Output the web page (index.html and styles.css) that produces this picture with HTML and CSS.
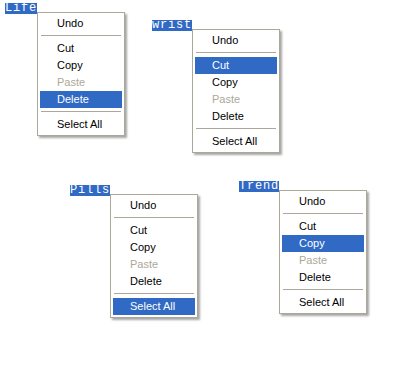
FILE: index.html
```html
<!DOCTYPE html>
<html lang="en">
<head>
    <meta charset="UTF-8">
    <title>Context menus</title>
    <link rel="stylesheet" href="styles.css">
</head>
<body>
    <div class="canvas">

        <!-- Life: Delete выделен -->
        <div class="demo demo-life">
            <span class="word">Life</span>
            <ul class="menu">
                <li class="item">Undo</li>
                <li class="sep"></li>
                <li class="item">Cut</li>
                <li class="item">Copy</li>
                <li class="item disabled">Paste</li>
                <li class="item active">Delete</li>
                <li class="sep"></li>
                <li class="item">Select All</li>
            </ul>
        </div>

        <!-- wrist: Cut выделен -->
        <div class="demo demo-wrist">
            <span class="word">wrist</span>
            <ul class="menu">
                <li class="item">Undo</li>
                <li class="sep"></li>
                <li class="item active">Cut</li>
                <li class="item">Copy</li>
                <li class="item disabled">Paste</li>
                <li class="item">Delete</li>
                <li class="sep"></li>
                <li class="item">Select All</li>
            </ul>
        </div>

        <!-- Pills: Select All выделен -->
        <div class="demo demo-pills">
            <span class="word">Pills</span>
            <ul class="menu">
                <li class="item">Undo</li>
                <li class="sep"></li>
                <li class="item">Cut</li>
                <li class="item">Copy</li>
                <li class="item disabled">Paste</li>
                <li class="item">Delete</li>
                <li class="sep"></li>
                <li class="item active">Select All</li>
            </ul>
        </div>

        <!-- Trend: Copy выделен -->
        <div class="demo demo-trend">
            <span class="word">Trend</span>
            <ul class="menu">
                <li class="item">Undo</li>
                <li class="sep"></li>
                <li class="item">Cut</li>
                <li class="item active">Copy</li>
                <li class="item disabled">Paste</li>
                <li class="item">Delete</li>
                <li class="sep"></li>
                <li class="item">Select All</li>
            </ul>
        </div>

    </div>
</body>
</html>
```

FILE: styles.css
```css
body {
    margin: 0;
    background: #fff;
}

.canvas {
    position: relative;
    width: 395px;
    height: 369px;
}

/* каждое меню стоит в своём месте на холсте */
.demo {
    position: absolute;
    display: grid;
    grid-template-columns: auto auto;
    align-items: start;
}

.demo-life  { left: 5px;   top: 3px; }
.demo-wrist { left: 152px; top: 20px; }
.demo-pills { left: 70px;  top: 185px; }
.demo-trend { left: 239px; top: 181px; }

/* выделенное слово */
.word {
    grid-column: 1;
    grid-row: 1;
    font-family: "Liberation Mono", monospace;
    font-size: 12px;
    letter-spacing: 0.8px;
    line-height: 11px;
    height: 11px;
    background: #316ac5;
    color: #fff;
}

.menu {
    grid-column: 2;
    grid-row: 2;
    margin: -2px 0 0 0;
    padding: 2px;
    list-style: none;
    width: 82px;
    background: #fff;
    border: 1px solid #aca899;
    box-shadow: 2px 2px 2px rgba(0, 0, 0, 0.35);
    font-family: "Liberation Sans", Arial, sans-serif;
    font-size: 11px;
    color: #000;
}

.item {
    height: 17px;
    line-height: 17px;
    padding-left: 17px;
    white-space: nowrap;
}

.item.disabled {
    color: #aca899;
}

.item.active {
    background: #316ac5;
    color: #fff;
}

.sep {
    height: 1px;
    margin: 3px 1px 4px;
    background: #aca899;
}
```
